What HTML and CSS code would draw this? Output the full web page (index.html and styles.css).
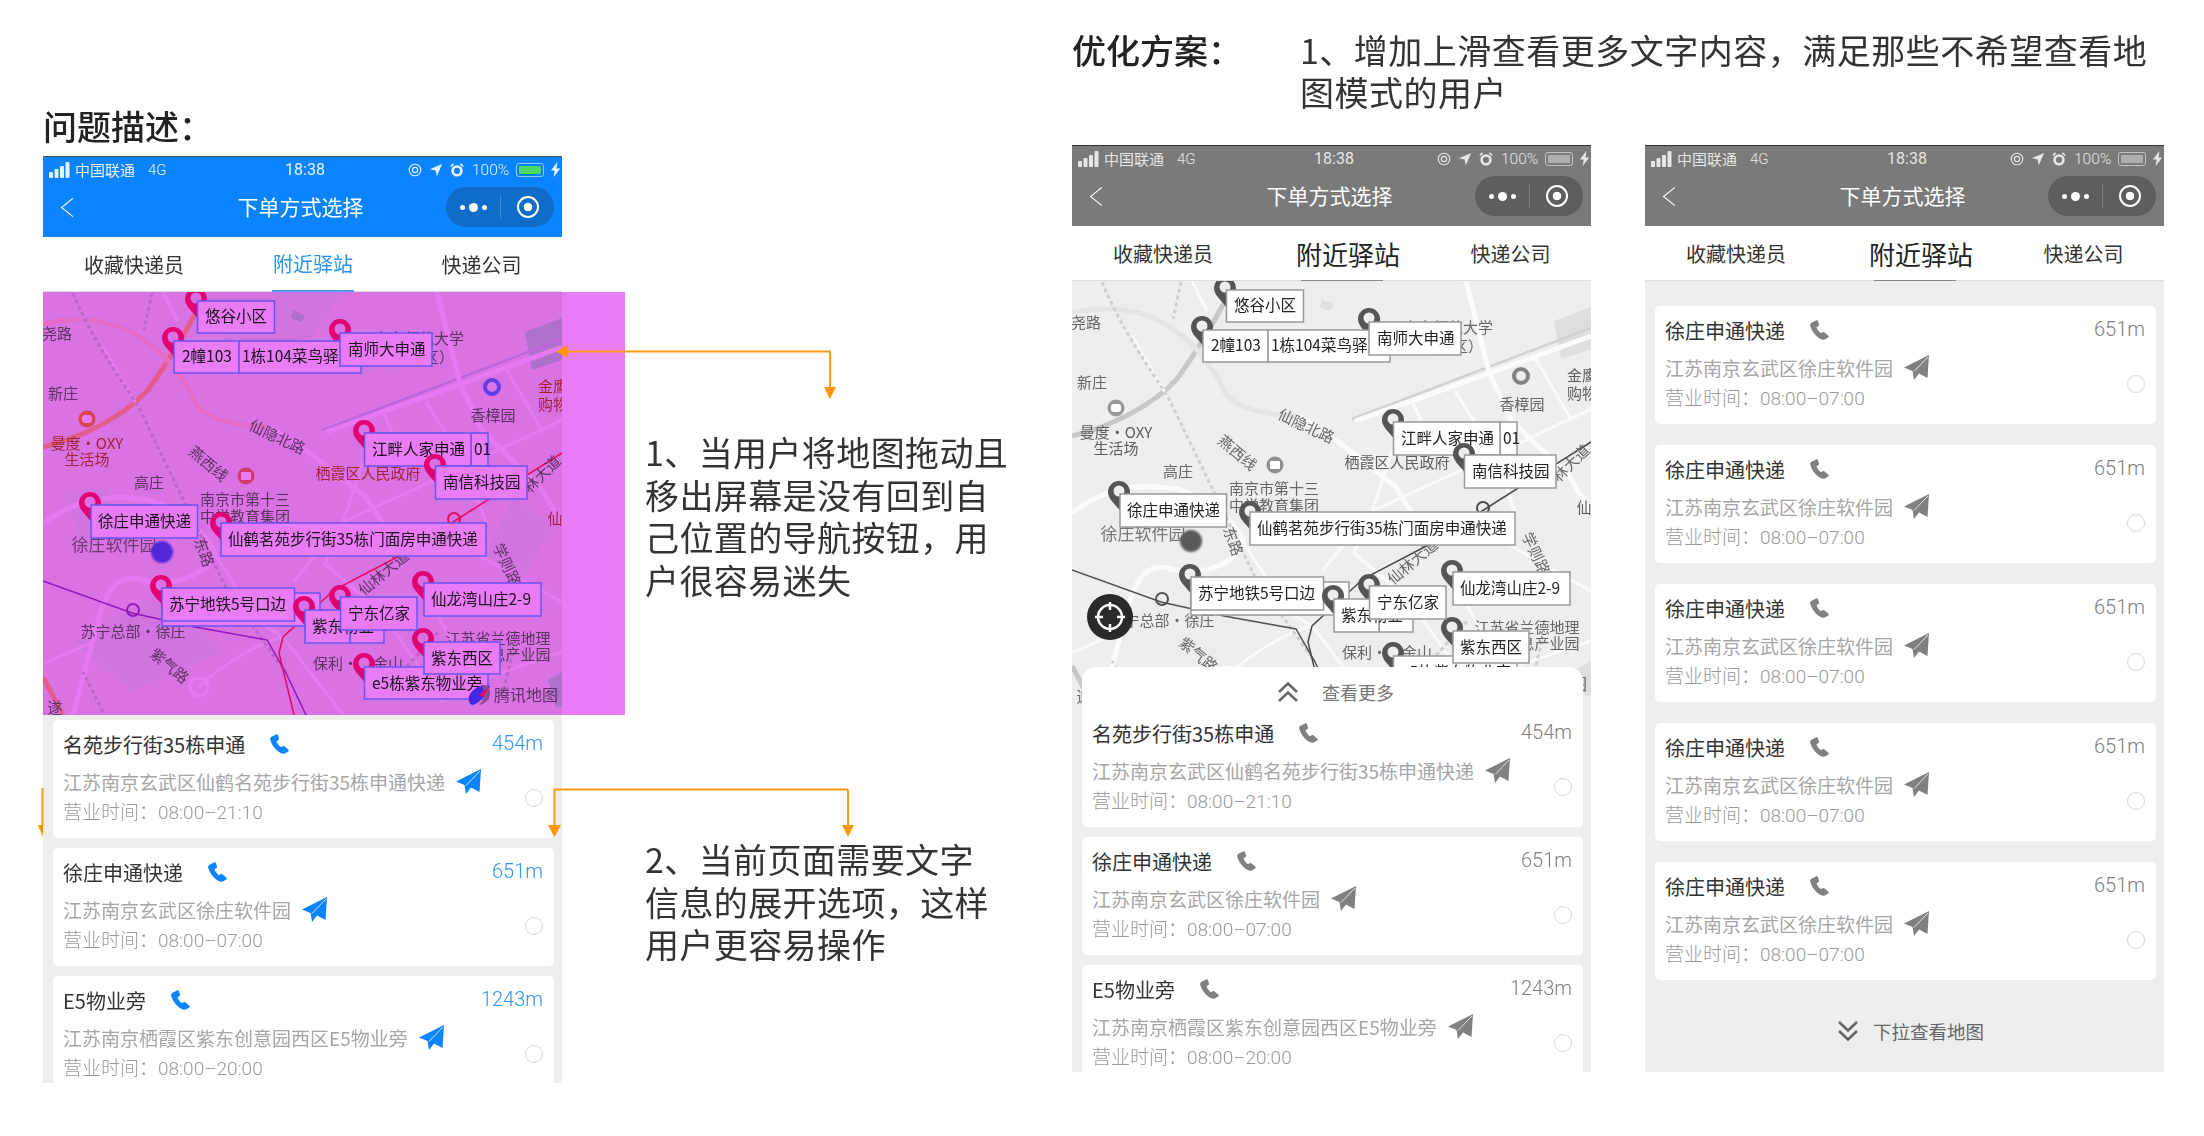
FILE: index.html
```html
<!DOCTYPE html>
<html lang="zh-CN">
  <head>
    <meta charset="UTF-8" />
    <title>下单方式选择 优化方案</title>
    <link rel="stylesheet" href="styles.css">
  </head>
  <body>
    <!-- shared icons and the map, each phone pulls them in with use -->
    <svg class="defs" aria-hidden="true">
      <symbol id="iconSignal" viewBox="0 0 21 16">
        <rect x="0" y="10" width="4" height="6" rx="1"/>
        <rect x="5.5" y="7" width="4" height="9" rx="1"/>
        <rect x="11" y="4" width="4" height="12" rx="1"/>
        <rect x="16.5" y="0" width="4" height="16" rx="1"/>
      </symbol>
      <symbol id="iconAt" viewBox="0 0 16 16">
        <circle cx="8" cy="8" r="6.6" fill="none" stroke="currentColor" stroke-width="1.3"/>
        <circle cx="8" cy="8" r="3" fill="none" stroke="currentColor" stroke-width="1.3"/>
      </symbol>
      <symbol id="iconGps" viewBox="0 0 16 16"><path d="M15 1 9 15 7.5 8.500 1 7Z"/></symbol>
      <symbol id="iconAlarm" viewBox="0 0 16 16">
        <circle cx="8" cy="9" r="5" fill="none" stroke="currentColor" stroke-width="3"/>
        <path d="M1 4 4 1M15 4 12 1" stroke="currentColor" stroke-width="2"/>
      </symbol>
      <symbol id="iconBolt" viewBox="0 0 14 16"><path d="M8 0 1 9h4l-1 7 7-9H7Z"/></symbol>
      <symbol id="iconCall" viewBox="0 0 21 20">
        <path d="M3 2.500 7 .5C8 0 8.700.5 9 1.300L10 4.500C10.200 5.300 9.900 5.900 9.200 6.300L7.500 7.300C8.200 9.600 9.800 11.800 12 13.200L13.600 12.300C14.300 11.900 15 12 15.600 12.600L19.200 15.400C19.900 16.100 19.900 17 19.200 17.600L16.800 19C15.800 19.800 13.200 19.900 11.800 19.100 6.500 16.200 2.600 11 1.200 5.500.8 4.300 1.900 3 3 2.500Z"/>
      </symbol>
      <symbol id="iconSend" viewBox="0 0 25 25">
        <path d="M25 0 23.500 23 15 18.500 10 25 8.500 16 0 12.500Z"/>
        <path d="M24 2 10 16.500" stroke="#fff" stroke-width=".8" fill="none"/>
      </symbol>
      <symbol id="iconUp" viewBox="0 0 22 22">
        <path d="M2 11 11 2.500 20 11M2 20 11 11.500 20 20" fill="none" stroke="currentColor" stroke-width="2.600"/>
      </symbol>
      <symbol id="iconDown" viewBox="0 0 22 22">
        <path d="M2 2 11 10.500 20 2M2 11 11 19.500 20 11" fill="none" stroke="currentColor" stroke-width="2.600"/>
      </symbol>
      <symbol id="iconPin" viewBox="-12 -12 26 42" overflow="visible">
        <path d="M-11 1a11 11 0 1 1 22 0c0 6-3 8-5 12l0 13-8-10c-4-5-9-9-9-15Z" fill="var(--pin)"/>
        <circle cx="0" cy="0" r="5.500" fill="#eee"/>
      </symbol>

      <symbol id="cityMap" viewBox="0 0 519 423">
        <rect width="519" height="423" fill="#eee"/>
        <path class="park" d="M160 0 300 0 270 45 190 60ZM250 18l12 6-4 6-10-4ZM300 75l30-20 20 10-30 20ZM20 200 60 195 90 240 40 255ZM40 225l12 4-2 10-12-4ZM340 60l20 8-4 14-18-6ZM470 205l40 30-30 50-40-20ZM120 300l60 60-90 40-60-50Z"/>
        <path class="parkDeep" d="M482 40l37-14v42l-30 10ZM505 388l14-8v34l-6 2ZM250 18l12 6-4 6-10-4Z"/>

        <path class="road-main" d="M0 155C40 145 80 125 105 98 125 70 140 45 153 20"/>
        <path class="road-soft" d="M0 32C60 18 100 40 128 72L148 100C152 120 172 132 224 135"/>
        <path class="road-main" d="M0 385 20 423"/>
        <path class="road-line" d="M519 47 280 138"/>
        <path class="road" d="M519 55 421 91 283 140"/>
        <path class="road" d="M224 135C250 145 290 180 323 205L345 240M394 0 417 91 440 140 497 195 519 232"/>
        <path class="road-thin" d="M383 110 421 170 443 231M519 128 420 175 300 230 282 272 340 322M320 170 300 230M462 75 500 140M340 120 360 165M300 230 250 290"/>
        <path class="road" d="M0 232C25 212 60 200 105 208 130 215 165 240 172 262 160 285 130 295 100 288 80 282 65 290 55 330L30 423"/>
        <path class="road-thin" d="M172 262 215 330 240 345M156 395C180 370 220 350 240 345M0 372 50 350M60 55 95 115M120 0 135 30M430 260 519 310M395 324 430 390 519 360M340 322 400 410M240 345 300 423"/>
        <circle class="road-thin" cx="156" cy="395" r="9"/>
        <path class="rail" d="M30 1C50 50 80 90 97 118L184 298 243 381M109 1 101 38M60 420 40 380"/>
        <path class="rail" d="M350 390 395 340M470 360 460 400"/>
        <path class="metro-purple" d="M0 289 89 321 152 335 224 348 243 381 263 423"/>
        <path class="metro-red" d="M519 161 421 223 362 261 291 298 240 345 236 361 251 423"/>

        <circle cx="44" cy="127" r="8.500" fill="#f08a50"/><rect x="39" y="123" width="10" height="8" rx="3" fill="#fff"/>
        <circle cx="203" cy="184" r="8.500" fill="#e87a6a"/><rect x="198" y="180" width="10" height="8" rx="1" fill="#fff"/>
        <circle cx="449" cy="95" r="7" fill="none" stroke="#6a80f0" stroke-width="4"/>
        <circle cx="90" cy="318" r="6" fill="none" stroke="#a030c0" stroke-width="2"/>
        <circle cx="411" cy="227" r="6" fill="none" stroke="#ff1060" stroke-width="2"/>

        <text class="place" x="14" y="47">尧路</text>
        <text class="place" x="20" y="107">新庄</text>
        <text class="place place-red" x="44" y="157">曼度·OXY</text>
        <text class="place place-red" x="44" y="173">生活场</text>
        <text class="place" x="106" y="196">高庄</text>
        <text class="place" x="202" y="213">南京市第十三</text>
        <text class="place" x="202" y="230">中学教育集团</text>
        <text class="place place-big" x="71" y="259">徐庄软件园</text>
        <text class="place" x="90" y="345">苏宁总部·徐庄</text>
        <text class="place place-red" x="325" y="187">栖霞区人民政府</text>
        <text class="place" x="450" y="129">香樟园</text>
        <text class="place" x="376" y="52">南京师范大学</text>
        <text class="place" x="366" y="71">（仙林校区）</text>
        <text class="place place-red" x="510" y="100">金鹰</text>
        <text class="place place-red" x="510" y="118">购物</text>
        <text class="place" x="455" y="352">江苏省兰德地理</text>
        <text class="place" x="470" y="368">信息产业园</text>
        <text class="place" x="315" y="377">保利·紫金山</text>
        <text class="place" x="12" y="421">遂</text>
        <text class="place place-red" x="512" y="232">仙</text>
        <text class="place" transform="translate(232 150) rotate(25)">仙隐北路</text>
        <text class="place" transform="translate(162 176) rotate(40)">燕西线</text>
        <text class="place" transform="translate(156 262) rotate(70)">东路</text>
        <text class="place" transform="translate(123 378) rotate(40)">紫气路</text>
        <text class="place" transform="translate(344 285) rotate(-40)">仙林大道</text>
        <text class="place" transform="translate(503 186) rotate(-45)">林大道</text>
        <text class="place" transform="translate(459 275) rotate(65)">学则路</text>

        <circle cx="119" cy="260" r="11" fill="#5a4ce0" class="my-dot"/>

        <use href="#iconPin" x="141" y="-6" width="26" height="42"/>
        <use href="#iconPin" x="118" y="33" width="26" height="42"/>
        <use href="#iconPin" x="285" y="25" width="26" height="42"/>
        <use href="#iconPin" x="309" y="126" width="26" height="42"/>
        <use href="#iconPin" x="35" y="198" width="26" height="42"/>
        <use href="#iconPin" x="166" y="218" width="26" height="42"/>
        <use href="#iconPin" x="106" y="281" width="26" height="42"/>
        <use href="#iconPin" x="285" y="291" width="26" height="42"/>
        <use href="#iconPin" x="368" y="277" width="26" height="42"/>
        <use href="#iconPin" x="368" y="334" width="26" height="42"/>
        <use href="#iconPin" x="309" y="359" width="26" height="42"/>

        <rect class="tag-box" x="154.500" y="9" width="77" height="32"/>
        <text class="tag-text" x="162" y="30">悠谷小区</text>
        <rect class="tag-box" x="131" y="49" width="65" height="32"/>
        <text class="tag-text" x="139" y="70">2幢103</text>
        <rect class="tag-box" x="196" y="49" width="122" height="32"/>
        <text class="tag-text" x="199" y="70">1栋104菜鸟驿站</text>
        <rect class="tag-box" x="297" y="41" width="92" height="33"/>
        <text class="tag-text" x="305" y="63">南师大申通</text>
        <rect class="tag-box" x="428" y="141" width="17" height="33"/>
        <text class="tag-text" x="431" y="163">01</text>
        <rect class="tag-box" x="321.500" y="141" width="106.500" height="33"/>
        <text class="tag-text" x="329" y="163">江畔人家申通</text>
        <use href="#iconPin" x="380" y="160" width="26" height="42"/>
        <rect class="tag-box" x="392.500" y="174" width="91.500" height="33"/>
        <text class="tag-text" x="400" y="196">南信科技园</text>
        <rect class="tag-box" x="48" y="213" width="106.500" height="33"/>
        <text class="tag-text" x="55" y="235">徐庄申通快递</text>
        <rect class="tag-box" x="178" y="231" width="265" height="33"/>
        <text class="tag-text" x="185" y="253">仙鹤茗苑步行街35栋门面房申通快递</text>
        <rect class="tag-box" x="119" y="301" width="158" height="33"/>
        <rect class="tag-box" x="119" y="296" width="132.500" height="33"/>
        <text class="tag-text" x="126" y="318">苏宁地铁5号口边</text>
        <use href="#iconPin" x="249" y="302" width="26" height="42"/>
        <rect class="tag-box" x="307" y="318" width="34" height="33"/>
        <rect class="tag-box" x="262" y="318" width="45" height="33"/>
        <text class="tag-text" x="269" y="340">紫东物业</text>
        <rect class="tag-box" x="297.500" y="305" width="76.500" height="33"/>
        <text class="tag-text" x="305" y="327">宁东亿家</text>
        <rect class="tag-box" x="381" y="291" width="117" height="33"/>
        <text class="tag-text" x="388" y="313">仙龙湾山庄2-9</text>
        <rect class="tag-box" x="321.500" y="375" width="123.500" height="32"/>
        <text class="tag-text" x="329" y="397">e5栋紫东物业旁</text>
        <rect class="tag-box" x="381" y="350" width="76" height="32"/>
        <text class="tag-text" x="388" y="372">紫东西区</text>

        <path d="M447 394C438 392 430 396 426 404 425 410 427 413 430 413 438 410 443 403 447 394Z" fill="#4a4cf0"/>
        <path d="M438 393C444 392 448 396 447 402 446 408 442 412 436 413 441 408 444 401 438 393Z" fill="#999"/>
        <path d="M446 395 436 403 440 405Z" fill="#ff1060"/>
        <text class="map-brand" x="451" y="409">腾讯地图</text>
      </symbol>
    </svg>

    <div class="page">
      <section class="problemCol">
        <h2 class="sectionTitle">问题描述<span class="colon">：</span></h2>
        <div class="problemRow">
          <div class="phone">
            <div class="statusBar">
              <svg class="signalIcon"><use href="#iconSignal"/></svg>
              <span class="carrier">中国联通</span>
              <span class="netType">4G</span>
              <span class="clock">18:38</span>
              <span class="statusRight">
                <svg class="statusIcon"><use href="#iconAt"/></svg>
                <svg class="statusIcon"><use href="#iconGps"/></svg>
                <svg class="statusIcon"><use href="#iconAlarm"/></svg>
                <span class="percent">100%</span>
                <span class="battery"><span class="batteryFill"></span></span>
                <svg class="boltIcon"><use href="#iconBolt"/></svg>
              </span>
            </div>
            <div class="navBar">
              <span class="backArrow"></span>
              <span class="navTitle">下单方式选择</span>
              <div class="capsule">
                <span class="capsuleDots"><i></i><b></b><i></i></span>
                <span class="capsuleLine"></span>
                <span class="capsuleTarget"></span>
              </div>
            </div>
            <div class="tabs">
              <span class="tab">收藏快递员</span>
              <span class="tab tabActive">附近驿站</span>
              <span class="tab">快递公司</span>
            </div>
            <div class="mapBox">
              <svg class="mapSvg" width="519" height="423"><use href="#cityMap"/></svg>
              <div class="magentaMask"></div>
            </div>
            <div class="list">
              <div class="card">
                <div class="cardMain">
                  <div class="cardTitle"><span>名苑步行街35栋申通</span><svg class="callIcon"><use href="#iconCall"/></svg></div>
                  <div class="cardAddr"><span>江苏南京玄武区仙鹤名苑步行街35栋申通快递</span><svg class="sendIcon"><use href="#iconSend"/></svg></div>
                  <div class="cardHours">营业时间<span class="colon">：</span>08:00–21:10</div>
                </div>
                <div class="cardSide"><span class="distance">454m</span><span class="radio"></span></div>
              </div>
              <div class="card">
                <div class="cardMain">
                  <div class="cardTitle"><span>徐庄申通快递</span><svg class="callIcon"><use href="#iconCall"/></svg></div>
                  <div class="cardAddr"><span>江苏南京玄武区徐庄软件园</span><svg class="sendIcon"><use href="#iconSend"/></svg></div>
                  <div class="cardHours">营业时间<span class="colon">：</span>08:00–07:00</div>
                </div>
                <div class="cardSide"><span class="distance">651m</span><span class="radio"></span></div>
              </div>
              <div class="card">
                <div class="cardMain">
                  <div class="cardTitle"><span>E5物业旁</span><svg class="callIcon"><use href="#iconCall"/></svg></div>
                  <div class="cardAddr"><span>江苏南京栖霞区紫东创意园西区E5物业旁</span><svg class="sendIcon"><use href="#iconSend"/></svg></div>
                  <div class="cardHours">营业时间<span class="colon">：</span>08:00–20:00</div>
                </div>
                <div class="cardSide"><span class="distance">1243m</span><span class="radio"></span></div>
              </div>
            </div>
          </div>

          <div class="notes">
            <p class="note noteFirst">1、当用户将地图拖动且<br>移出屏幕是没有回到自<br>己位置的导航按钮，用<br>户很容易迷失</p>
            <p class="note noteSecond">2、当前页面需要文字<br>信息的展开选项，这样<br>用户更容易操作</p>
          </div>
        </div>
      </section>

      <section class="planCol">
        <div class="planHead">
          <h2 class="sectionTitle planTitle">优化方案<span class="colon">：</span></h2>
          <p class="planText">1、增加上滑查看更多文字内容，满足那些不希望查看地<br>图模式的用户</p>
        </div>
        <div class="planPhones">
          <div class="phone phoneGrey">
            <div class="statusBar">
              <svg class="signalIcon"><use href="#iconSignal"/></svg>
              <span class="carrier">中国联通</span>
              <span class="netType">4G</span>
              <span class="clock">18:38</span>
              <span class="statusRight">
                <svg class="statusIcon"><use href="#iconAt"/></svg>
                <svg class="statusIcon"><use href="#iconGps"/></svg>
                <svg class="statusIcon"><use href="#iconAlarm"/></svg>
                <span class="percent">100%</span>
                <span class="battery"><span class="batteryFill"></span></span>
                <svg class="boltIcon"><use href="#iconBolt"/></svg>
              </span>
            </div>
            <div class="navBar">
              <span class="backArrow"></span>
              <span class="navTitle">下单方式选择</span>
              <div class="capsule">
                <span class="capsuleDots"><i></i><b></b><i></i></span>
                <span class="capsuleLine"></span>
                <span class="capsuleTarget"></span>
              </div>
            </div>
            <div class="tabs">
              <span class="tab">收藏快递员</span>
              <span class="tab tabActive">附近驿站</span>
              <span class="tab">快递公司</span>
            </div>
            <div class="mapBox">
              <svg class="mapSvg" width="519" height="423"><use href="#cityMap"/></svg>
              <span class="locateBtn">
                <svg width="46" height="46" viewBox="0 0 46 46">
                  <circle cx="23" cy="23" r="12" fill="none" stroke="#fff" stroke-width="2.500"/>
                  <path d="M23 8v8M23 30v8M8 23h8M30 23h8" stroke="#fff" stroke-width="2.500"/>
                </svg>
              </span>
            </div>
            <div class="list">
              <div class="sheetHead">
                <svg class="chevronIcon"><use href="#iconUp"/></svg>
                <span>查看更多</span>
              </div>
              <div class="card cardFlat">
                <div class="cardMain">
                  <div class="cardTitle"><span>名苑步行街35栋申通</span><svg class="callIcon"><use href="#iconCall"/></svg></div>
                  <div class="cardAddr"><span>江苏南京玄武区仙鹤名苑步行街35栋申通快递</span><svg class="sendIcon"><use href="#iconSend"/></svg></div>
                  <div class="cardHours">营业时间<span class="colon">：</span>08:00–21:10</div>
                </div>
                <div class="cardSide"><span class="distance">454m</span><span class="radio"></span></div>
              </div>
              <div class="card">
                <div class="cardMain">
                  <div class="cardTitle"><span>徐庄申通快递</span><svg class="callIcon"><use href="#iconCall"/></svg></div>
                  <div class="cardAddr"><span>江苏南京玄武区徐庄软件园</span><svg class="sendIcon"><use href="#iconSend"/></svg></div>
                  <div class="cardHours">营业时间<span class="colon">：</span>08:00–07:00</div>
                </div>
                <div class="cardSide"><span class="distance">651m</span><span class="radio"></span></div>
              </div>
              <div class="card">
                <div class="cardMain">
                  <div class="cardTitle"><span>E5物业旁</span><svg class="callIcon"><use href="#iconCall"/></svg></div>
                  <div class="cardAddr"><span>江苏南京栖霞区紫东创意园西区E5物业旁</span><svg class="sendIcon"><use href="#iconSend"/></svg></div>
                  <div class="cardHours">营业时间<span class="colon">：</span>08:00–20:00</div>
                </div>
                <div class="cardSide"><span class="distance">1243m</span><span class="radio"></span></div>
              </div>
            </div>
          </div>

          <div class="phone phoneGrey">
            <div class="statusBar">
              <svg class="signalIcon"><use href="#iconSignal"/></svg>
              <span class="carrier">中国联通</span>
              <span class="netType">4G</span>
              <span class="clock">18:38</span>
              <span class="statusRight">
                <svg class="statusIcon"><use href="#iconAt"/></svg>
                <svg class="statusIcon"><use href="#iconGps"/></svg>
                <svg class="statusIcon"><use href="#iconAlarm"/></svg>
                <span class="percent">100%</span>
                <span class="battery"><span class="batteryFill"></span></span>
                <svg class="boltIcon"><use href="#iconBolt"/></svg>
              </span>
            </div>
            <div class="navBar">
              <span class="backArrow"></span>
              <span class="navTitle">下单方式选择</span>
              <div class="capsule">
                <span class="capsuleDots"><i></i><b></b><i></i></span>
                <span class="capsuleLine"></span>
                <span class="capsuleTarget"></span>
              </div>
            </div>
            <div class="tabs">
              <span class="tab">收藏快递员</span>
              <span class="tab tabActive">附近驿站</span>
              <span class="tab">快递公司</span>
            </div>
            <div class="list listFull">
              <div class="card">
                <div class="cardMain">
                  <div class="cardTitle"><span>徐庄申通快递</span><svg class="callIcon"><use href="#iconCall"/></svg></div>
                  <div class="cardAddr"><span>江苏南京玄武区徐庄软件园</span><svg class="sendIcon"><use href="#iconSend"/></svg></div>
                  <div class="cardHours">营业时间<span class="colon">：</span>08:00–07:00</div>
                </div>
                <div class="cardSide"><span class="distance">651m</span><span class="radio"></span></div>
              </div>
              <div class="card">
                <div class="cardMain">
                  <div class="cardTitle"><span>徐庄申通快递</span><svg class="callIcon"><use href="#iconCall"/></svg></div>
                  <div class="cardAddr"><span>江苏南京玄武区徐庄软件园</span><svg class="sendIcon"><use href="#iconSend"/></svg></div>
                  <div class="cardHours">营业时间<span class="colon">：</span>08:00–07:00</div>
                </div>
                <div class="cardSide"><span class="distance">651m</span><span class="radio"></span></div>
              </div>
              <div class="card">
                <div class="cardMain">
                  <div class="cardTitle"><span>徐庄申通快递</span><svg class="callIcon"><use href="#iconCall"/></svg></div>
                  <div class="cardAddr"><span>江苏南京玄武区徐庄软件园</span><svg class="sendIcon"><use href="#iconSend"/></svg></div>
                  <div class="cardHours">营业时间<span class="colon">：</span>08:00–07:00</div>
                </div>
                <div class="cardSide"><span class="distance">651m</span><span class="radio"></span></div>
              </div>
              <div class="card">
                <div class="cardMain">
                  <div class="cardTitle"><span>徐庄申通快递</span><svg class="callIcon"><use href="#iconCall"/></svg></div>
                  <div class="cardAddr"><span>江苏南京玄武区徐庄软件园</span><svg class="sendIcon"><use href="#iconSend"/></svg></div>
                  <div class="cardHours">营业时间<span class="colon">：</span>08:00–07:00</div>
                </div>
                <div class="cardSide"><span class="distance">651m</span><span class="radio"></span></div>
              </div>
              <div class="card">
                <div class="cardMain">
                  <div class="cardTitle"><span>徐庄申通快递</span><svg class="callIcon"><use href="#iconCall"/></svg></div>
                  <div class="cardAddr"><span>江苏南京玄武区徐庄软件园</span><svg class="sendIcon"><use href="#iconSend"/></svg></div>
                  <div class="cardHours">营业时间<span class="colon">：</span>08:00–07:00</div>
                </div>
                <div class="cardSide"><span class="distance">651m</span><span class="radio"></span></div>
              </div>
              <div class="pullHint">
                <svg class="chevronIcon"><use href="#iconDown"/></svg>
                <span>下拉查看地图</span>
              </div>
            </div>
          </div>
        </div>
      </section>

      <!-- orange callout arrows drawn over the first phone -->
      <svg class="arrows" width="2204" height="1136">
        <path d="M566 351.500H830V388M848 789.500H554.500V826M848 789.500V826M42.500 788V826" fill="none" stroke="#ff9a14" stroke-width="2"/>
        <path d="M556 351.500 568 345V358Z M824 387H836L830 399Z M548 825H561L554.500 837Z M842 825H854L848 837Z M38 825H43V837Z" fill="#ff9500"/>
      </svg>
    </div>
  </body>
</html>
```

FILE: styles.css
```css
* {
  box-sizing: border-box;
}

body {
  margin: 0;
  background: #fff;
  color: #333;
  font-family: Roboto, 'Noto Sans CJK SC', sans-serif;
}

.defs {
  position: absolute;
  width: 0;
  height: 0;
}

.page {
  position: relative;
  display: flex;
  width: 2204px;
  height: 1136px;
  overflow: hidden;
}

.problemCol {
  width: 1029px;
  margin-left: 43px;
  padding-top: 105px;
}

.sectionTitle {
  height: 42px;
  margin: 0 0 9px;
  font-family: 'Noto Sans CJK SC', sans-serif;
  font-size: 34px;
  font-weight: 500;
  line-height: 42px;
  color: #222;
}

/* the colon sits centered in the reference, TC glyph does that */
.colon {
  font-family: 'Noto Sans CJK TC', sans-serif;
}

.problemRow {
  display: flex;
}

.notes {
  margin-left: 83px;
  padding-top: 275px;
}

.note {
  margin: 0;
  font-family: 'Noto Sans CJK SC', sans-serif;
  font-size: 34px;
  line-height: 42.7px;
  letter-spacing: 0.4px;
  white-space: nowrap;
  color: #333;
}

.noteSecond {
  margin-top: 236px;
}

.planCol {
  padding-top: 29px;
}

.planHead {
  display: flex;
  margin-bottom: 32px;
}

.planTitle {
  width: 228px;
  margin: 0;
}

.planText {
  margin: 0;
  font-family: 'Noto Sans CJK SC', sans-serif;
  font-size: 34px;
  line-height: 42px;
  letter-spacing: 0.5px;
  white-space: nowrap;
  color: #333;
}

.planPhones {
  display: flex;
  gap: 54px;
}

/* phone */
.phone {
  --head: #0d84ff;
  --capsule: #0f6cc8;
  --edge: #555;
  --accent: #0d84ff;
  --dist: #2e96f5;
  --batt: #4cd964;
  --tagLine: #70b0ff;
  --pin: #f80078;
  position: relative;
  display: flex;
  flex-direction: column;
  width: 519px;
  height: 927px;
  background: #eee;
}

.phoneGrey {
  --head: #7a7a7a;
  --capsule: #5e5e5e;
  --edge: #333;
  --accent: #808080;
  --dist: #808080;
  --batt: #b0b0b0;
  --tagLine: #999;
  --pin: #555;
}

.statusBar {
  position: relative;
  display: flex;
  flex: none;
  align-items: center;
  height: 34px;
  padding: 0 0 8px 6px;
  overflow: hidden;
  border-top: 1px solid var(--edge);
  background: var(--head);
  color: #e8f2ff;
  font-size: 15px;
}

.phoneGrey .statusBar {
  color: #e6e6e6;
}

.signalIcon {
  width: 21px;
  height: 16px;
  margin-right: 5px;
  fill: currentColor;
}

.carrier {
  font-family: 'Noto Sans CJK SC', sans-serif;
  width: 73px;
}

.netType {
  font-weight: 300;
}

.clock {
  position: absolute;
  left: 0;
  right: 0;
  text-align: center;
  padding-left: 5px;
  font-size: 16px;
}

.statusRight {
  display: flex;
  align-items: center;
  position: absolute;
  left: 365px;
  white-space: nowrap;
}

.statusIcon {
  width: 14px;
  height: 14px;
  margin-right: 7px;
  fill: currentColor;
  color: inherit;
}

.percent {
  width: 44px;
  margin-left: 1px;
  font-weight: 300;
  font-size: 15.5px;
}

.battery {
  display: flex;
  width: 28px;
  height: 14px;
  padding: 2px;
  border: 1px solid rgba(255, 255, 255, 0.55);
  border-radius: 3px;
}

.batteryFill {
  flex: 1;
  border-radius: 1px;
  background: var(--batt);
}

.boltIcon {
  width: 13px;
  height: 15px;
  margin-left: 6px;
  fill: currentColor;
}

.navBar {
  position: relative;
  display: flex;
  flex: none;
  align-items: center;
  justify-content: center;
  height: 47px;
  padding: 0 4px 15px 0;
  background: var(--head);
}

.backArrow {
  position: absolute;
  left: 22px;
  top: 10px;
  width: 15px;
  height: 15px;
  border-left: 1.5px solid #fff;
  border-bottom: 1.5px solid #fff;
  transform: rotate(45deg) skew(-6deg, -6deg);
}

.navTitle {
  font-family: 'Noto Sans CJK SC', sans-serif;
  font-size: 21px;
  color: #fff;
}

.capsule {
  position: absolute;
  left: 403px;
  top: -3px;
  display: flex;
  align-items: center;
  width: 108px;
  height: 40px;
  border-radius: 20px;
  background: var(--capsule);
}

.capsuleDots {
  display: flex;
  align-items: center;
  justify-content: center;
  gap: 4px;
  width: 54px;
}

.capsuleDots i {
  width: 5px;
  height: 5px;
  border-radius: 50%;
  background: #fff;
}

.capsuleDots b {
  width: 9px;
  height: 9px;
  border-radius: 50%;
  background: #fff;
}

.capsuleLine {
  width: 1px;
  height: 24px;
  background: rgba(255, 255, 255, 0.2);
}

.capsuleTarget {
  width: 22px;
  height: 22px;
  margin-left: 16px;
  border: 2.5px solid #fff;
  border-radius: 50%;
  background: radial-gradient(circle, #fff 4px, transparent 4.6px);
}

.tabs {
  display: grid;
  flex: none;
  grid-template-columns: 182px 176px 1fr;
  height: 55px;
  border-bottom: 1px solid #ddd;
  background: #fff;
  font-family: 'Noto Sans CJK SC', sans-serif;
}

.tab {
  display: flex;
  align-items: center;
  justify-content: center;
  font-size: 20px;
  color: #333;
}

.tabActive {
  margin: 0 47px;
  margin-bottom: -1px;
  border-bottom: 2px solid #4a9ff0;
  color: #2a93f0;
  white-space: nowrap;
}

.phoneGrey .tabActive {
  padding-left: 12px;
  border-bottom: 1px solid #888;
  font-size: 26px;
  color: #222;
}

/* map */
.mapBox {
  position: relative;
  height: 423px;
  flex: none;
}

.mapSvg {
  display: block;
}

.phoneGrey .mapSvg {
  filter: grayscale(1);
}

.magentaMask {
  position: absolute;
  left: 0;
  top: 0;
  width: 582px;
  height: 423px;
  background: #e97bf5;
  mix-blend-mode: multiply;
}

.locateBtn {
  position: absolute;
  left: 15px;
  top: 313px;
  display: flex;
  width: 46px;
  height: 46px;
  border-radius: 50%;
  background: #2a2a2a;
}

.park {
  fill: #e6f0ea;
}

.parkDeep {
  fill: #bfe8d4;
}

.road {
  fill: none;
  stroke: #fbfbfb;
  stroke-width: 5;
}

.road-thin {
  fill: none;
  stroke: #fafafa;
  stroke-width: 3;
}

.road-main {
  fill: none;
  stroke: #f8c090;
  stroke-width: 5;
}

.road-soft {
  fill: none;
  stroke: #f8e0d0;
  stroke-width: 5;
}

.road-line {
  fill: none;
  stroke: #d0d0e4;
  stroke-width: 2.5;
}

.rail {
  fill: none;
  stroke: #cfcfcf;
  stroke-width: 3;
  stroke-dasharray: 4 3;
}

.metro-purple {
  fill: none;
  stroke: #a030c0;
  stroke-width: 1.5;
}

.metro-red {
  fill: none;
  stroke: #ff1060;
  stroke-width: 1.5;
}

.place {
  font-family: 'Noto Sans CJK SC', sans-serif;
  font-size: 15px;
  text-anchor: middle;
  fill: #666;
}

.place-big {
  font-size: 17px;
  fill: #777;
}

.place-red {
  fill: #b04838;
}

.my-dot {
  filter: blur(0.8px);
}

.tag-box {
  fill: #fff;
  stroke: var(--tagLine);
  stroke-width: 1.5;
}

.tag-text {
  font-family: 'Noto Sans CJK SC', sans-serif;
  font-size: 15.5px;
  fill: #222;
}

.map-brand {
  font-family: 'Noto Sans CJK SC', sans-serif;
  font-size: 16px;
  fill: #666;
}

/* list and cards */
.list {
  position: relative;
  flex: 1;
  min-height: 0;
  padding: 5px 8px 0 10px;
  overflow: hidden;
}

.phoneGrey .list {
  overflow: visible;
}

.listFull {
  display: flex;
  flex-direction: column;
  gap: 21px;
  padding-top: 25px;
}

.card {
  display: flex;
  flex: none;
  justify-content: space-between;
  height: 118px;
  margin-bottom: 10px;
  padding: 9px 11px 0 10px;
  border-radius: 5px;
  background: #fff;
}

.listFull .card {
  margin-bottom: 0;
}

.cardFlat {
  border-radius: 0 0 5px 5px;
}

.cardTitle,
.cardAddr {
  display: flex;
  align-items: center;
  font-family: 'Noto Sans CJK SC', sans-serif;
}

.cardTitle {
  height: 30px;
  font-size: 20px;
  color: #333;
}

.cardAddr {
  height: 32px;
  margin-top: 6px;
  font-size: 19px;
  color: #a6a6a6;
}

.cardHours {
  margin-top: -1px;
  height: 30px;
  line-height: 30px;
  font-family: Roboto, 'Noto Sans CJK SC', sans-serif;
  font-size: 19px;
  font-weight: 300;
  color: #999;
}

.callIcon {
  width: 21px;
  height: 20px;
  margin-left: 24px;
  fill: var(--accent);
}

.sendIcon {
  width: 25px;
  height: 25px;
  margin-left: 11px;
  fill: var(--accent);
}

.cardSide {
  display: flex;
  flex-direction: column;
  align-items: flex-end;
}

.distance {
  height: 30px;
  font-size: 20px;
  font-weight: 300;
  line-height: 28px;
  color: var(--dist);
}

.radio {
  width: 18px;
  height: 18px;
  margin-top: 30px;
  border: 1px solid #d8d8d8;
  border-radius: 50%;
}

.sheetHead {
  display: flex;
  align-items: center;
  justify-content: center;
  gap: 23px;
  height: 42px;
  margin-top: -42px;
  padding: 7px 0 0 6px;
  border-radius: 14px 14px 0 0;
  background: #fff;
  font-family: 'Noto Sans CJK SC', sans-serif;
  font-size: 18px;
  color: #777;
}

.chevronIcon {
  width: 22px;
  height: 22px;
  color: #666;
}

.pullHint {
  display: flex;
  align-items: center;
  justify-content: center;
  gap: 14px;
  margin-top: 17px;
  padding-left: 10px;
  font-family: 'Noto Sans CJK SC', sans-serif;
  font-size: 18.5px;
  color: #666;
}

.arrows {
  position: absolute;
  left: 0;
  top: 0;
  pointer-events: none;
}
```
